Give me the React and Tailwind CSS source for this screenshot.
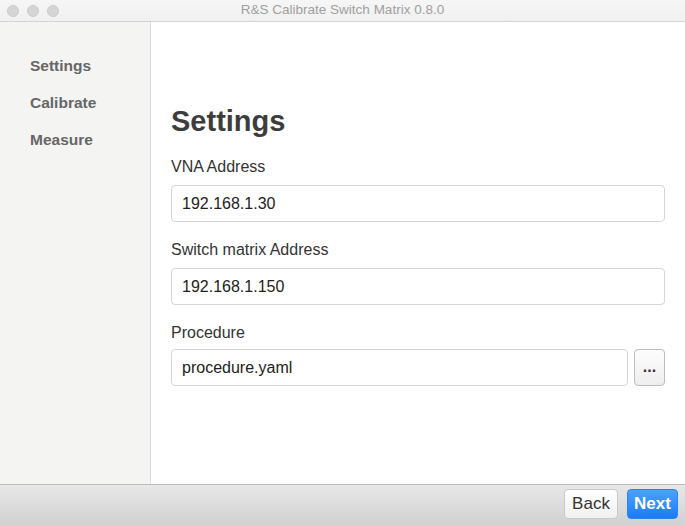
import React from "react";

export default function App() {
  const font = { fontFamily: '"Liberation Sans", Arial, sans-serif' };
  return (
    <div className="w-[685px] h-[525px] flex flex-col bg-white overflow-hidden" style={font}>
      {/* Title bar */}
      <div className="relative h-[22px] shrink-0 flex items-center bg-gradient-to-b from-[#f6f6f6] to-[#f0f0f0] border-b border-[#d3d3d3]">
        <div className="flex items-center gap-[8px] pl-[7px]">
          <div className="w-[12px] h-[12px] rounded-full bg-[#d5d5d5] border border-[#cbcbcb]" />
          <div className="w-[12px] h-[12px] rounded-full bg-[#d5d5d5] border border-[#cbcbcb]" />
          <div className="w-[12px] h-[12px] rounded-full bg-[#d5d5d5] border border-[#cbcbcb]" />
        </div>
        <div className="absolute inset-0 flex items-center justify-center text-[13.5px] text-[#a0a0a0]">
          R&amp;S Calibrate Switch Matrix 0.8.0
        </div>
      </div>

      {/* Main */}
      <div className="flex flex-1 min-h-0">
        <div className="w-[151px] shrink-0 bg-[#f4f4f3] border-r border-[#dadada] flex flex-col pt-[34px] pl-[30px] gap-[17px] text-[15.5px] font-bold text-[#666666]">
          <div className="leading-[20px]">Settings</div>
          <div className="leading-[20px]">Calibrate</div>
          <div className="leading-[20px]">Measure</div>
        </div>
        <div className="flex-1 flex flex-col pl-[20px] pr-[20px] pt-[82px]">
          <h1 className="text-[29px] font-bold text-[#3d3d3d] leading-[34px]">Settings</h1>
          <div className="mt-[19px] text-[16px] text-[#333] leading-[20px]">VNA Address</div>
          <div className="mt-[8px] h-[37px] border border-[#d6d6d6] rounded-[4px] flex items-center pl-[10px] text-[16px] text-[#222]">
            192.168.1.30
          </div>
          <div className="mt-[18px] text-[16px] text-[#333] leading-[20px]">Switch matrix Address</div>
          <div className="mt-[8px] h-[37px] border border-[#d6d6d6] rounded-[4px] flex items-center pl-[10px] text-[16px] text-[#222]">
            192.168.1.150
          </div>
          <div className="mt-[18px] text-[16px] text-[#333] leading-[20px]">Procedure</div>
          <div className="mt-[6px] flex gap-[6px]">
            <div className="flex-1 h-[37px] border border-[#d6d6d6] rounded-[4px] flex items-center pl-[10px] text-[16px] text-[#222]">
              procedure.yaml
            </div>
            <div className="w-[31px] h-[37px] border border-[#bdbdbd] rounded-[4px] bg-gradient-to-b from-[#fdfdfd] to-[#eeeeee] flex items-center justify-center text-[16px] font-bold text-[#333] pb-[2px]">
              ...
            </div>
          </div>
        </div>
      </div>

      {/* Bottom bar */}
      <div className="h-[41px] shrink-0 border-t border-[#bcbcbc] bg-gradient-to-b from-[#e9e8e9] to-[#d2d1d2] flex items-center justify-end gap-[9px] pr-[7px] pb-[2px]">
        <div className="w-[54px] h-[30px] rounded-[4px] border border-[#c9c9c9] bg-gradient-to-b from-[#ffffff] to-[#f1f1f1] flex items-center justify-center text-[17px] text-[#333]">
          Back
        </div>
        <div className="w-[51px] h-[30px] rounded-[4px] border border-[#2b83f0] bg-gradient-to-b from-[#4aa2ff] to-[#1a7bf7] flex items-center justify-center text-[17px] font-bold text-white">
          Next
        </div>
      </div>
    </div>
  );
}
